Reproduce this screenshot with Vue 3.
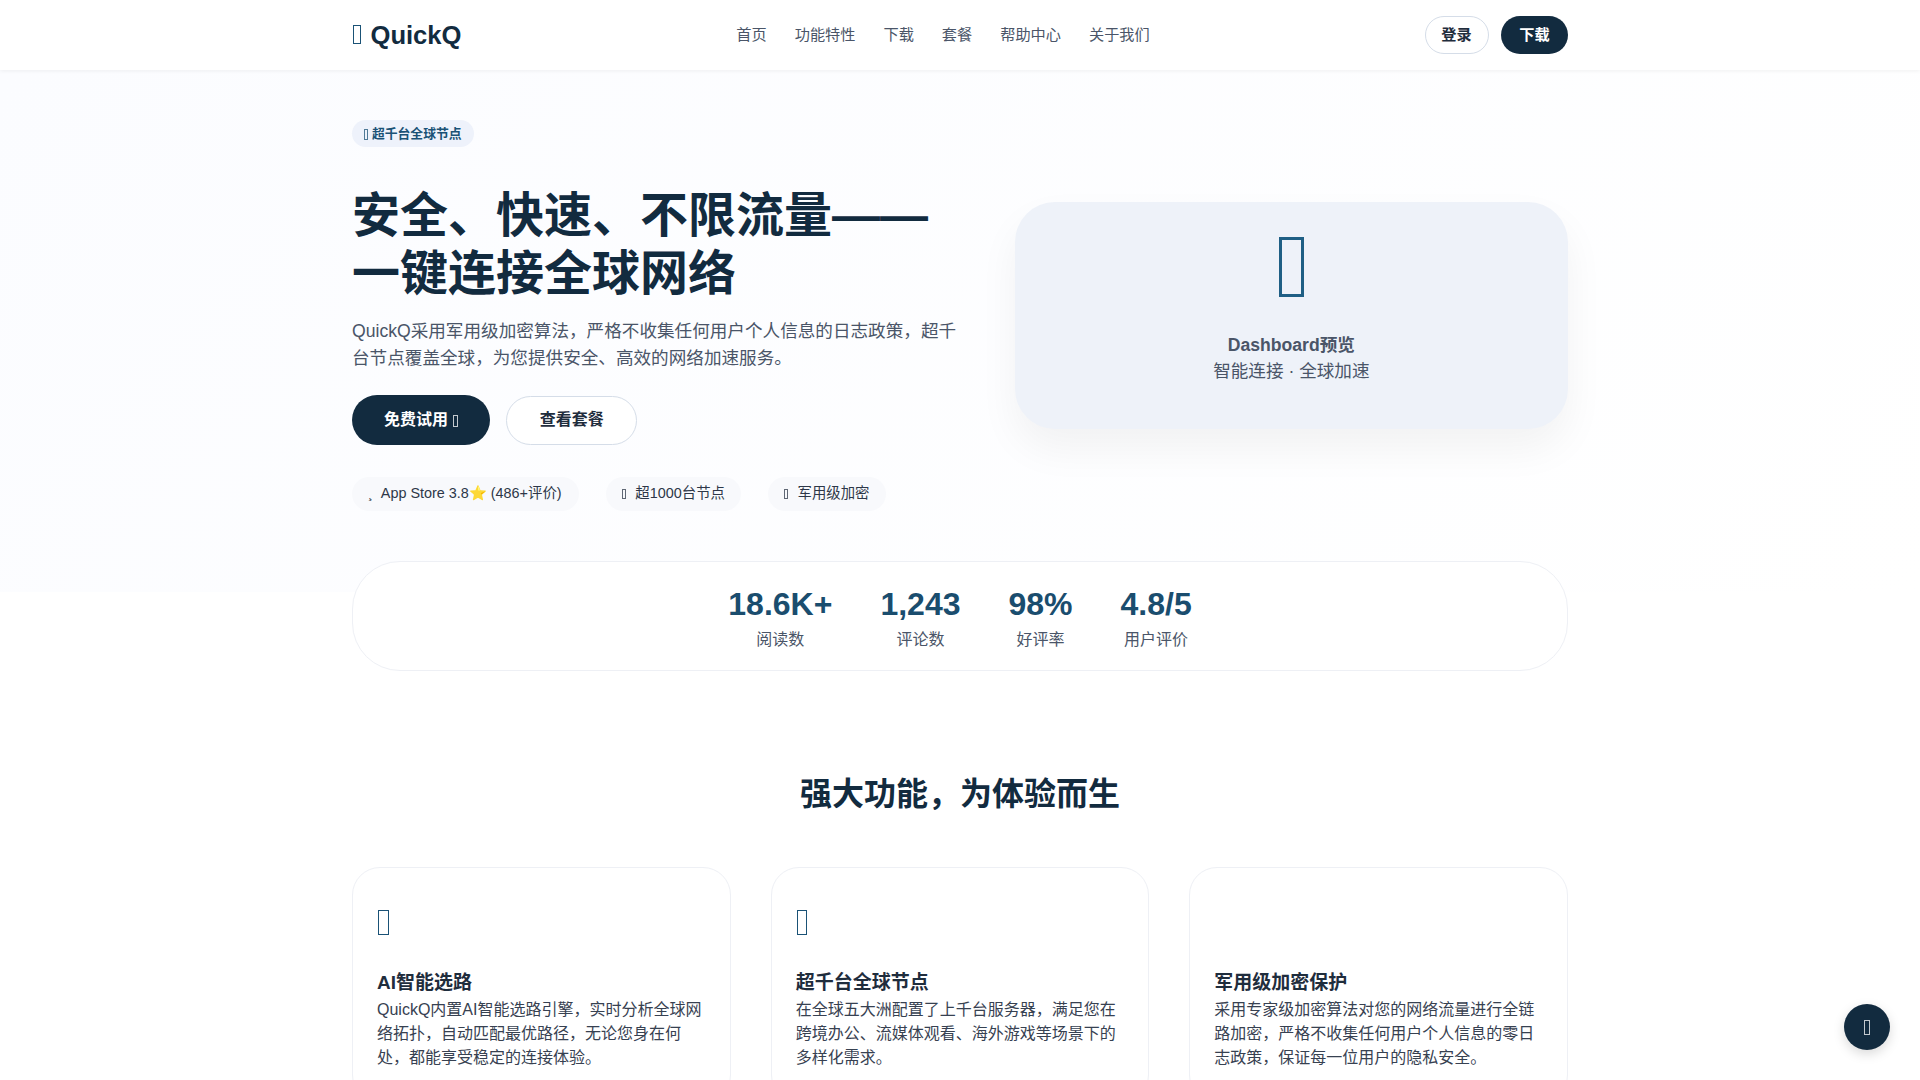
<template>
  <div class="page" lang="zh-CN">
    <header class="navbar">
      <div class="container nav-inner">
        <a class="logo"><i class="tofu logo-ico"></i>QuickQ</a>
        <nav class="nav-links">
          <a v-for="l in links" :key="l">{{ l }}</a>
        </nav>
        <div class="nav-btns">
          <a class="btn-outline small">登录</a>
          <a class="btn-dark small">下载</a>
        </div>
      </div>
    </header>

    <section class="hero">
      <div class="container hero-grid">
        <div class="hero-left">
          <span class="badge"><i class="tofu"></i> 超千台全球节点</span>
          <h1>安全、快速、不限流量——一键连接全球网络</h1>
          <p class="lead">QuickQ采用军用级加密算法，严格不收集任何用户个人信息的日志政策，超千台节点覆盖全球，为您提供安全、高效的网络加速服务。</p>
          <div class="hero-btns">
            <a class="btn-dark big">免费试用 <i class="tofu"></i></a>
            <a class="btn-outline big">查看套餐</a>
          </div>
          <div class="meta">
            <span class="pill first"><i class="apple">¸</i>App Store 3.8⭐ (486+评价)</span>
            <span class="pill"><i class="tofu"></i>超1000台节点</span>
            <span class="pill"><i class="tofu"></i>军用级加密</span>
          </div>
        </div>
        <div class="visual">
          <i class="tofu visual-ico"></i>
          <strong>Dashboard预览</strong>
          <span>智能连接 · 全球加速</span>
        </div>
      </div>
    </section>

    <div class="container">
      <div class="stats">
        <div v-for="s in stats" :key="s.label" class="stat">
          <div class="num">{{ s.num }}</div>
          <div class="label">{{ s.label }}</div>
        </div>
      </div>

      <h2>强大功能，为体验而生</h2>

      <div class="cards">
        <div v-for="c in cards" :key="c.title" class="card">
          <div class="card-ico"><i v-if="c.icon" class="tofu"></i></div>
          <h3>{{ c.title }}</h3>
          <p>{{ c.text }}</p>
        </div>
      </div>
    </div>

    <a class="to-top"><i class="tofu"></i></a>
  </div>
</template>

<script setup>
const links = ['首页', '功能特性', '下载', '套餐', '帮助中心', '关于我们'];
const stats = [
  { num: '18.6K+', label: '阅读数' },
  { num: '1,243', label: '评论数' },
  { num: '98%', label: '好评率' },
  { num: '4.8/5', label: '用户评价' },
];
const cards = [
  { icon: true, title: 'AI智能选路', text: 'QuickQ内置AI智能选路引擎，实时分析全球网络拓扑，自动匹配最优路径，无论您身在何处，都能享受稳定的连接体验。' },
  { icon: true, title: '超千台全球节点', text: '在全球五大洲配置了上千台服务器，满足您在跨境办公、流媒体观看、海外游戏等场景下的多样化需求。' },
  { icon: false, title: '军用级加密保护', text: '采用专家级加密算法对您的网络流量进行全链路加密，严格不收集任何用户个人信息的零日志政策，保证每一位用户的隐私安全。' },
];
</script>

<style>
body {
  margin: 0;
  overflow-x: hidden;
  font-family: "Liberation Sans", "Noto Sans CJK SC", sans-serif;
}
</style>

<style scoped>
.page {
  color: #1f2d3d;
  line-height: 1.5;
  background: #fff;
}
.container {
  width: 1216px;
  margin: 0 auto;
}
/* missing-icon box, sized through font-size */
.tofu {
  display: inline-block;
  box-sizing: border-box;
  width: 0.42em;
  height: 1em;
  font-size: 10.5px;
  border: 1px solid currentColor;
  vertical-align: middle;
  opacity: 0.75;
}
.navbar {
  height: 70px;
  background: #fff;
  box-shadow: 0 1px 4px rgba(0, 0, 0, 0.06);
  position: relative;
  z-index: 2;
}
.nav-inner {
  height: 100%;
  display: flex;
  align-items: center;
  justify-content: space-between;
}
.logo {
  display: flex;
  align-items: center;
  gap: 9.5px;
  font-size: 25.6px;
  font-weight: 700;
  color: #122b3f;
}
.logo-ico {
  font-size: 19px;
  margin-left: 1px;
  color: #1a5276;
  border-width: 1.5px;
  opacity: 1;
}
.nav-links {
  display: flex;
  gap: 28px;
  font-size: 15.2px;
  color: #4a5568;
}
.nav-btns {
  display: flex;
  align-items: center;
  gap: 12.5px;
}
.btn-dark {
  display: inline-block;
  background: #122b3f;
  color: #fff;
  font-weight: 700;
  border-radius: 40px;
}
.btn-outline {
  display: inline-block;
  background: #fff;
  color: #1f2d3d;
  font-weight: 700;
  border: 1.5px solid #d5dde8;
  border-radius: 40px;
}
.small {
  font-size: 15.2px;
  padding: 7.5px 18.3px;
}
.btn-outline.small {
  padding: 7px 15.8px;
}
.big {
  font-size: 16px;
  padding: 13px 32px;
}
.big .tofu {
  font-size: 11.5px;
  margin-left: 1px;
}
.btn-outline.big {
  padding: 11.5px 32.5px;
}
.hero {
  padding: 50px 0 81px;
  background: linear-gradient(135deg, #fbfcff 0%, #fff 100%);
}
.hero-grid {
  display: grid;
  grid-template-columns: 1.1fr 1fr;
  gap: 54px;
  align-items: center;
}
.badge {
  display: block;
  width: fit-content;
  padding: 4px 12px;
  background: #eef2fb;
  color: #1a5276;
  font-size: 12.8px;
  font-weight: 700;
  border-radius: 40px;
}
h1 {
  margin: 40px 0 16px;
  font-size: 48px;
  line-height: 1.2;
  font-weight: 700;
  color: #122b3f;
}
.lead {
  margin: 0 0 24px;
  font-size: 17.6px;
  color: #4a5568;
}
.hero-btns {
  display: flex;
  gap: 16px;
  align-items: center;
}
.meta {
  display: flex;
  gap: 27px;
  margin-top: 32px;
}
.pill {
  display: flex;
  align-items: center;
  gap: 9.2px;
  padding: 6px 16px;
  font-size: 14.4px;
  background: #f8f9fc;
  border-radius: 40px;
  color: #2d3748;
}
.pill.first {
  gap: 8px;
  padding-right: 17.2px;
}
.apple {
  font-style: normal;
}
.visual {
  height: 227px;
  box-sizing: border-box;
  padding-top: 35px;
  display: flex;
  flex-direction: column;
  align-items: center;
  background: #eef2f9;
  border-radius: 40px;
  box-shadow: 0 20px 40px rgba(0, 0, 0, 0.05);
  color: #4a5568;
  font-size: 17.6px;
}
.visual-ico {
  font-size: 60px;
  border-width: 3px;
  color: #1f5f85;
  margin-bottom: 35px;
  opacity: 1;
}
.stats {
  display: flex;
  justify-content: center;
  gap: 48px;
  margin-top: -31px;
  padding: 23px 24px 18px;
  background: #fff;
  border: 1px solid #eef0f5;
  border-radius: 48px;
  position: relative;
  text-align: center;
}
.num {
  font-size: 32px;
  font-weight: 700;
  color: #1a4d6e;
  line-height: 1.2;
}
.label {
  margin-top: 5px;
  font-size: 16px;
  color: #4a5568;
}
h2 {
  margin: 98.6px 0 49px;
  text-align: center;
  font-size: 32px;
  font-weight: 700;
  color: #122b3f;
}
.cards {
  display: grid;
  grid-template-columns: repeat(3, 1fr);
  gap: 40px;
}
.card {
  padding: 33.5px 24px 32px;
  border: 1px solid #eef0f5;
  border-radius: 28px;
  background: #fff;
}
.card-ico {
  height: 48px;
  margin-bottom: 20px;
  color: #1a5276;
  padding-top: 9px;
  box-sizing: border-box;
}
.card-ico .tofu {
  display: block;
  width: 10.5px;
  font-size: 25px;
  margin-left: 1px;
  opacity: 1;
  border-width: 1.5px;
}
h3 {
  margin: 0;
  font-size: 19px;
  font-weight: 700;
  color: #1f2d3d;
}
.card p {
  margin: 0;
  font-size: 16px;
  color: #374151;
}
.to-top {
  position: fixed;
  right: 30px;
  bottom: 30px;
  width: 46px;
  height: 46px;
  display: flex;
  align-items: center;
  justify-content: center;
  border-radius: 50%;
  background: #122b3f;
  color: #fff;
  box-shadow: 0 4px 12px rgba(0, 0, 0, 0.15);
}
.to-top .tofu {
  font-size: 15px;
}
</style>
